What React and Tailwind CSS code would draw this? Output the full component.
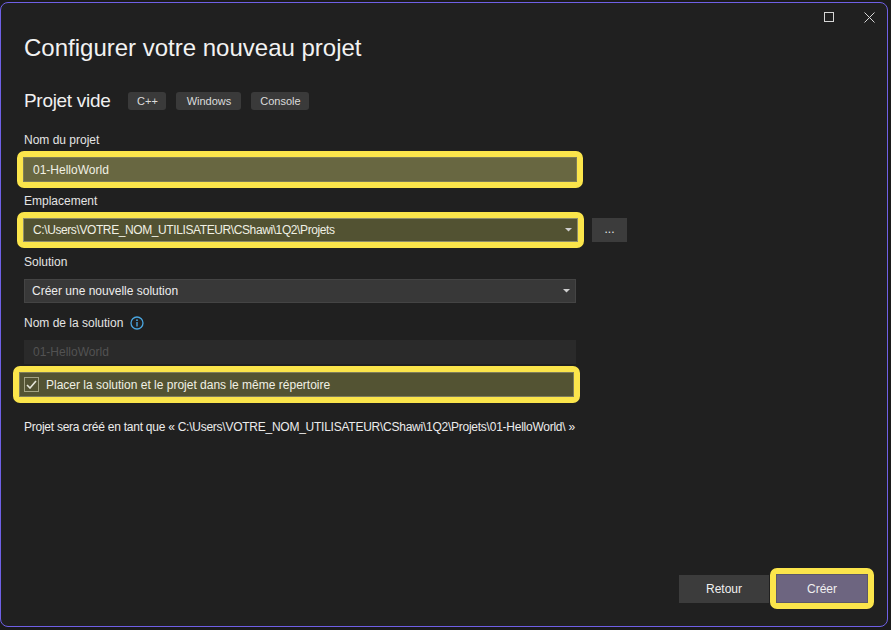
const font = "font-['Segoe_UI','Liberation_Sans',Arial,sans-serif]";

const Tag = ({ children, w }) => (
  <span className={`${w} h-[18px] flex items-center justify-center rounded-[3px] bg-[#3a3a3a] text-[11px] text-[#dcdcdc]`}>
    {children}
  </span>
);

const Caret = () => (
  <svg width="7" height="4" viewBox="0 0 7 4" className="shrink-0">
    <path d="M0 0h7L3.5 3.5z" fill="#cfcfcf" />
  </svg>
);

const Label = ({ children, mt }) => (
  <div className={`${mt} h-[16px] leading-[16px] text-[12px] text-[#e4e4e4] flex items-center gap-[7px]`}>
    {children}
  </div>
);

const App = () => {
  return (
    <div className={`w-[891px] h-[630px] bg-[#1b1b1b] pt-[2px] ${font}`}>
      <div className="w-[888px] h-[625px] rounded-[8px] border border-[#6f60e6] bg-[#202020] flex flex-col">
        {/* barre de titre */}
        <div className="h-[31px] flex justify-end items-start pt-[9px] pr-[12px] gap-[30px]">
          <div className="w-[10px] h-[10px] border border-[#d6d6d6]" />
          <svg width="11" height="11" viewBox="0 0 11 11">
            <path d="M0.5 0.5l10 10M10.5 0.5l-10 10" stroke="#d6d6d6" strokeWidth="1" />
          </svg>
        </div>

        <div className="pl-[23px] flex flex-col">
          <h1 className="h-[28px] leading-[28px] text-[24px] text-[#f2f2f2]">Configurer votre nouveau projet</h1>

          <div className="mt-[27px] h-[24px] flex items-center">
            <span className="text-[19px] leading-[24px] tracking-[-0.3px] text-[#f0f0f0] mr-[18px]">Projet vide</span>
            <div className="flex gap-[10px]">
              <Tag w="w-[38px]">C++</Tag>
              <Tag w="w-[65px]">Windows</Tag>
              <Tag w="w-[58px]">Console</Tag>
            </div>
          </div>

          <Label mt="mt-[19px]">Nom du projet</Label>
          <div className="mt-[3px] -ml-[7px] w-[566px] border-[6px] border-[#fbe54b] rounded-[7px]">
            <div className="h-[25px] bg-[#686741] border border-[#7d7c58] flex items-center pl-[9px] text-[12px] text-[#f0f0e4]">
              01-HelloWorld
            </div>
          </div>

          <Label mt="mt-[5px]">Emplacement</Label>
          <div className="mt-[3px] flex items-center">
            <div className="-ml-[7px] w-[567px] border-[6px] border-[#fbe54b] rounded-[7px]">
              <div className="h-[24px] bg-[#525232] border border-[#8d8c6c] flex items-center justify-between pl-[9px] pr-[5px] text-[12px] text-[#f0f0e4]">
                <span className="tracking-[-0.4px]">C:\Users\VOTRE_NOM_UTILISATEUR\CShawi\1Q2\Projets</span>
                <Caret />
              </div>
            </div>
            <div className="ml-[8px] w-[35px] h-[24px] bg-[#3c3c3c] flex items-center justify-center text-[12px] text-[#e8e8e8] leading-none pb-[3px]">
              ...
            </div>
          </div>

          <Label mt="mt-[6px]">Solution</Label>
          <div className="mt-[9px] w-[552px] h-[24px] bg-[#383838] border border-[#444444] flex items-center justify-between pl-[7px] pr-[5px] text-[12px] text-[#ececec]">
            <span>Créer une nouvelle solution</span>
            <Caret />
          </div>

          <Label mt="mt-[12px]">
            <span>Nom de la solution</span>
            <svg width="14" height="14" viewBox="0 0 14 14">
              <circle cx="7" cy="7" r="6" fill="none" stroke="#4aa6e0" strokeWidth="1.3" />
              <circle cx="7" cy="4.2" r="0.9" fill="#4aa6e0" />
              <path d="M7 6v4.5" stroke="#4aa6e0" strokeWidth="1.4" />
            </svg>
          </Label>
          <div className="mt-[9px] w-[552px] h-[24px] bg-[#2a2a2a] flex items-center pl-[9px] text-[12px] text-[#525252]">
            01-HelloWorld
          </div>

          <div className="mt-[2px] -ml-[11px] w-[567px] border-[6px] border-[#fbe54b] rounded-[7px]">
            <div className="h-[25px] bg-[#535333] border border-[#7e7d5c] flex items-center pl-[4px] text-[12px] text-[#f0f0e4]">
              <div className="w-[15px] h-[15px] border border-[#a3a283] flex items-center justify-center mr-[7px]">
                <svg width="11" height="9" viewBox="0 0 11 9">
                  <path d="M1 5l3 3 6-7" fill="none" stroke="#e6e6da" strokeWidth="1.6" />
                </svg>
              </div>
              Placer la solution et le projet dans le même répertoire
            </div>
          </div>

          <div className="mt-[16px] h-[16px] leading-[16px] text-[12px] tracking-[-0.25px] text-[#ececec]">
            Projet sera créé en tant que « C:\Users\VOTRE_NOM_UTILISATEUR\CShawi\1Q2\Projets\01-HelloWorld\ »
          </div>
        </div>

        <div className="flex-1" />

        <div className="flex justify-end items-center gap-[1px] pr-[13px] pb-[17px]">
          <button className="w-[90px] h-[28px] bg-[#3c3c3c] text-[12px] text-[#f0f0f0]">Retour</button>
          <div className="w-[104px] border-[6px] border-[#fbe54b] rounded-[7px]">
            <button className="w-full h-[29px] bg-[#6d6580] border border-[#5c5869] text-[12px] text-[#f0f0f0]">Créer</button>
          </div>
        </div>
      </div>
    </div>
  );
};

export default App;
